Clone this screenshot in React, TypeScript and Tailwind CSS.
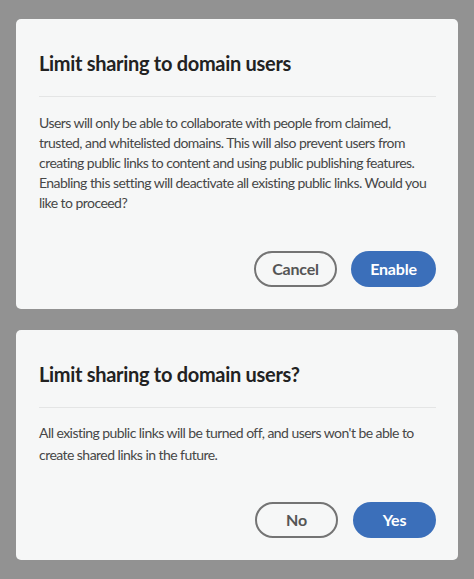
import React from "react";

const font = { fontFamily: "Lato, 'Open Sans', sans-serif" };

function Card({
  title,
  body,
  cancel,
  ok,
  bodyClass,
  btnGap,
  okW,
}: {
  title: string;
  body: string;
  cancel: string;
  ok: string;
  bodyClass: string;
  btnGap: string;
  okW: string;
}) {
  return (
    <div className="bg-[#f6f7f7] rounded-[5px] pl-[23px] pr-[22px] pt-[31px] pb-[22px]">
      <h2 className="text-[20px] leading-[26px] font-bold text-[#222222] tracking-[-0.3px]">
        {title}
      </h2>
      <div className="mt-[20px] h-px bg-[#e4e5e5]" />
      <p className={bodyClass}>{body}</p>
      <div className={btnGap}>
        <button className="w-[83px] h-[36px] rounded-full border-2 border-[#747474] text-[16px] font-bold text-[#555555] tracking-[-0.2px] flex items-center justify-center">
          {cancel}
        </button>
        <button className={okW + " h-[36px] rounded-full bg-[#3b6fba] text-[16px] font-bold text-white tracking-[-0.2px] flex items-center justify-center"}>
          {ok}
        </button>
      </div>
    </div>
  );
}

export default function App() {
  return (
    <div
      className="w-[474px] h-[579px] bg-[#929292] px-[16px] pt-[19px] flex flex-col gap-[21px]"
      style={font}
    >
      <Card
        title="Limit sharing to domain users"
        body="Users will only be able to collaborate with people from claimed, trusted, and whitelisted domains. This will also prevent users from creating public links to content and using public publishing features. Enabling this setting will deactivate all existing public links. Would you like to proceed?"
        cancel="Cancel"
        ok="Enable"
        bodyClass="mt-[16px] text-[14px] leading-[20px] text-[#474747] tracking-[-0.55px]"
        btnGap="mt-[38px] flex justify-end gap-[14px]"
        okW="w-[85px]"
      />
      <Card
        title="Limit sharing to domain users?"
        body="All existing public links will be turned off, and users won't be able to create shared links in the future."
        cancel="No"
        ok="Yes"
        bodyClass="mt-[14px] text-[14px] leading-[22px] text-[#474747] tracking-[-0.55px]"
        btnGap="mt-[36px] flex justify-end gap-[15px]"
        okW="w-[83px]"
      />
    </div>
  );
}
